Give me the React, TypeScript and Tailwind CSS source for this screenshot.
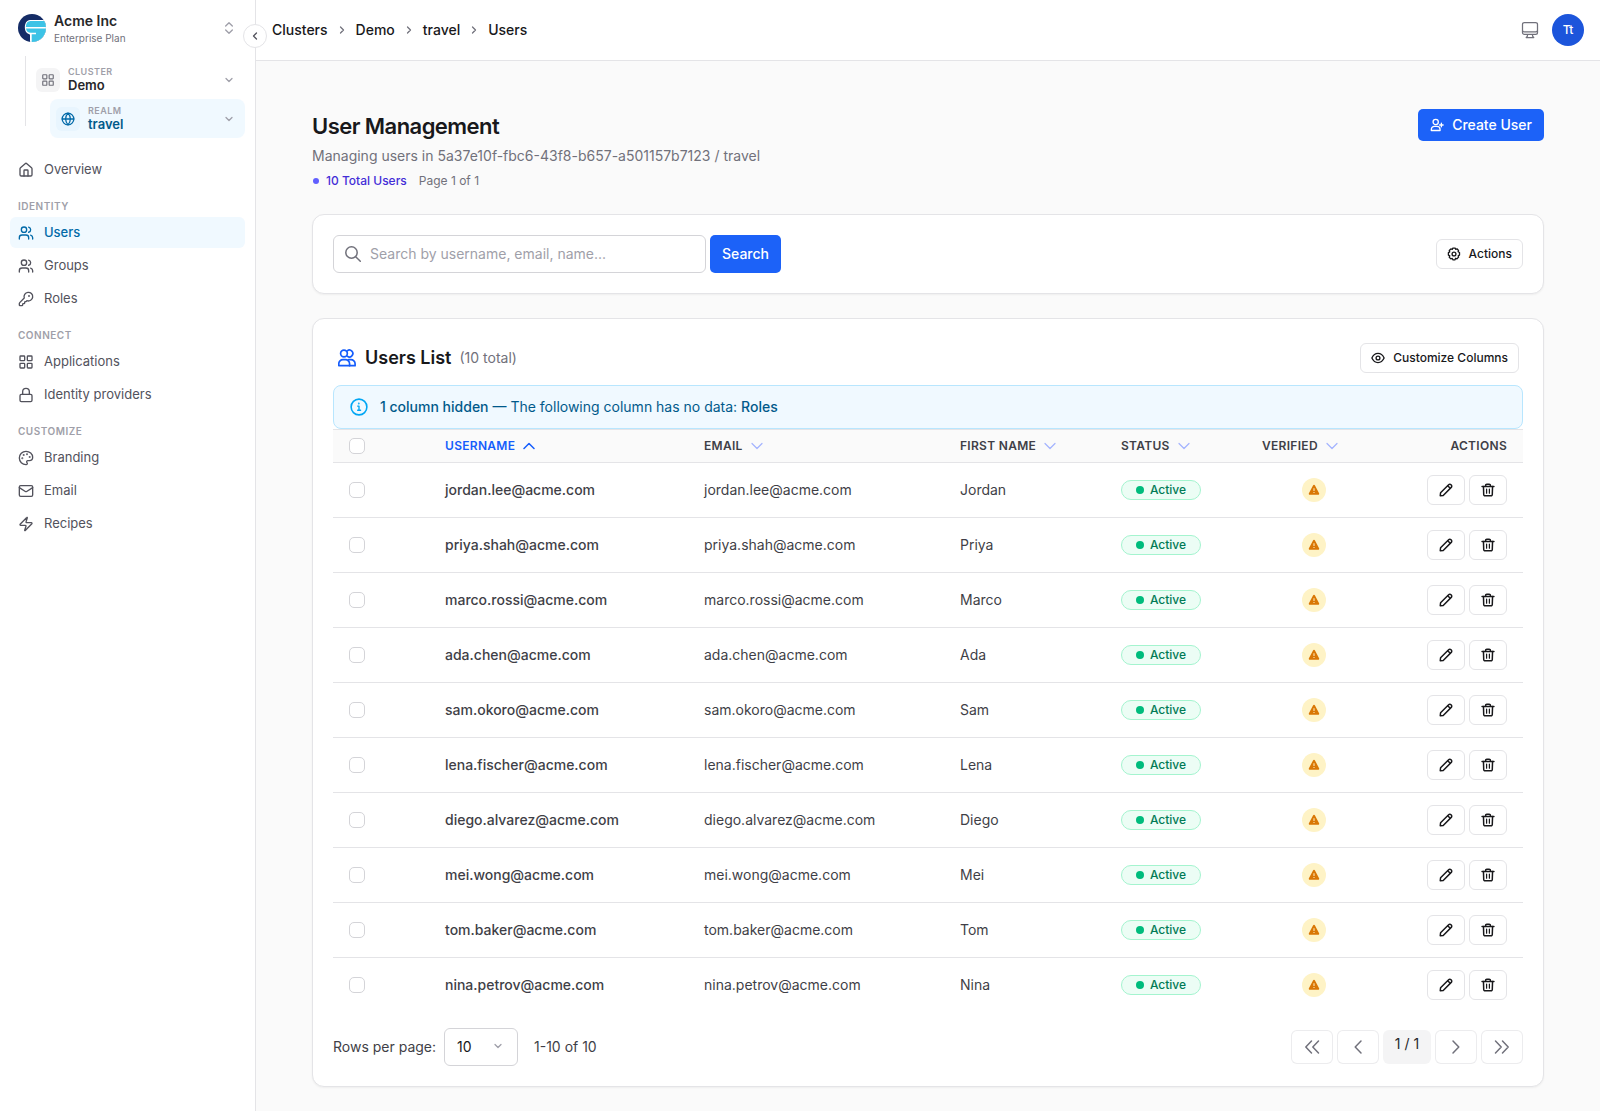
import type { ComponentType, ReactNode, SVGProps } from "react";
import {
  ChevronDown,
  ChevronLeft,
  ChevronRight,
  ChevronsUpDown,
  Globe,
  House,
  KeyRound,
  LayoutGrid,
  Lock,
  Mail,
  Palette,
  Users,
  Zap,
} from "lucide-react";
import { HiOutlineComputerDesktop } from "react-icons/hi2";

type IconProps = SVGProps<SVGSVGElement>;

function Glyph({ children, ...props }: IconProps & { children: ReactNode }) {
  return (
    <svg
      viewBox="0 0 16 16"
      fill="none"
      stroke="currentColor"
      strokeWidth="1.5"
      strokeLinecap="round"
      strokeLinejoin="round"
      aria-hidden="true"
      {...props}
    >
      {children}
    </svg>
  );
}

function BrandMark(props: IconProps) {
  return (
    <svg viewBox="0 0 28 28" aria-hidden="true" {...props}>
      <defs>
        <clipPath id="brand-disc">
          <circle cx="14" cy="14" r="14" />
        </clipPath>
      </defs>
      <g clipPath="url(#brand-disc)">
        <rect width="28" height="28" fill="#152c66" />
        <path d="M30 6H12C6.500 6 5.500 15.500 8.500 18.500C10 20 12 20.500 12 20.500V30H30Z" fill="#fff" />
        <path d="M30 7H12.500C9.500 7 8 9 7.800 13H30Z" fill="#3cc3e6" />
        <path d="M30 14.600H8C8.500 17.500 10 18.800 13 18.800H18V20.200H13.700V30H30Z" fill="#3cc3e6" />
      </g>
    </svg>
  );
}

function UserPlusIcon(props: IconProps) {
  return (
    <Glyph {...props}>
      <circle cx="6.500" cy="4.500" r="3" />
      <path d="M1.500 14.300v-1.300a3.500 3.500 0 0 1 3.500-3.500h3a3.500 3.500 0 0 1 3.500 3.500v1.300Z" />
      <path d="M13 6v4M11 8h4" />
    </Glyph>
  );
}

function PeopleIcon(props: IconProps) {
  return (
    <Glyph {...props}>
      <circle cx="5.300" cy="4" r="3" />
      <path d="M8.200 1.700a3 3 0 1 1 0 4.600" />
      <path d="M.7 14.800v-1.600a3.700 3.700 0 0 1 3.700-3.700h2.200a3.700 3.700 0 0 1 3.700 3.700v1.600Z" />
      <path d="M9.500 9.500h2a3.700 3.700 0 0 1 3.700 3.700v1.600h-4.900" />
    </Glyph>
  );
}

function GearIcon(props: IconProps) {
  return (
    <Glyph {...props}>
      <path d="M6.700 1.200h2.600l.6 1.500 1.500-.6 1.800 1.800-.5 1.500 1.600.9v2.900l-1.500.8.400 1.600-1.800 1.900-1.600-.6-.6 1.800H6.700l-.7-1.700-1.600.6-1.800-1.900.6-1.600-1.600-.7V6.500l1.500-.8-.5-1.700 1.800-1.800 1.600.6Z" />
      <circle cx="8" cy="8" r="2.200" />
    </Glyph>
  );
}

function EyeIcon(props: IconProps) {
  return (
    <Glyph {...props}>
      <path d="M1 8c1.600-3.400 4-5.200 7-5.200S13.400 4.600 15 8c-1.600 3.400-4 5.200-7 5.200S2.600 11.400 1 8Z" />
      <circle cx="8" cy="8" r="2.200" />
    </Glyph>
  );
}

function PencilIcon(props: IconProps) {
  return (
    <Glyph {...props}>
      <path d="m1.400 14.600.4-3.400 9.200-9.200a1.900 1.900 0 0 1 2.700 0l.3.300a1.900 1.900 0 0 1 0 2.700l-9.200 9.200Z" />
      <path d="m10 3.200 2.800 2.800" />
    </Glyph>
  );
}

function TrashIcon(props: IconProps) {
  return (
    <Glyph {...props}>
      <path d="M1.200 4h13.600M5.300 4V2.600a1.300 1.300 0 0 1 1.300-1.300h2.800a1.300 1.300 0 0 1 1.300 1.300V4" />
      <path d="m2.800 4 .3 9.200a1.500 1.500 0 0 0 1.500 1.500h6.800a1.500 1.500 0 0 0 1.500-1.500L13.200 4" />
      <path d="M6.400 7v4.600M9.600 7v4.600" strokeWidth="1.400" />
    </Glyph>
  );
}

function WarningIcon(props: IconProps) {
  return (
    <svg viewBox="0 0 12 12" aria-hidden="true" {...props}>
      <path
        d="M6 .8c.5 0 .8.200 1 .6l4.100 7.800c.4.800 0 1.600-.9 1.600H1.800c-.9 0-1.300-.8-.9-1.600L5 1.400c.2-.4.500-.6 1-.6Z"
        fill="#d97706"
      />
      <path d="M5.500 4.200h1v2.800h-1zM5.500 8h1v1h-1z" fill="#fef3c7" />
    </svg>
  );
}

function InfoIcon(props: IconProps) {
  return (
    <Glyph {...props}>
      <circle cx="8" cy="8" r="7" strokeWidth="1.400" />
      <path d="M6.800 7.200H8v3.600M6.800 10.900h2.600" strokeWidth="1.200" />
      <circle cx="7.800" cy="4.900" r=".3" strokeWidth="1" />
    </Glyph>
  );
}

function SearchIcon(props: IconProps) {
  return (
    <Glyph {...props}>
      <circle cx="6.500" cy="6.500" r="5.700" />
      <path d="m10.700 10.700 4.600 4.600" />
    </Glyph>
  );
}

function Arrow({ dir, ...props }: IconProps & { dir: "up" | "down" }) {
  return (
    <svg
      viewBox="0 0 12 8"
      fill="none"
      stroke="currentColor"
      strokeWidth={dir === "up" ? "1.5" : "1.2"}
      strokeLinecap="round"
      strokeLinejoin="round"
      aria-hidden="true"
      {...props}
    >
      <path d={dir === "up" ? "m1 6.500 5-5 5 5" : "m1 1.500 5 5 5-5"} />
    </svg>
  );
}

function PageArrow({ d }: { d: string }) {
  return (
    <Glyph className="size-4">
      <path d={d} />
    </Glyph>
  );
}

type NavEntry = { label: string; icon: ComponentType<any>; active?: boolean };

const navGroups: { title?: string; items: NavEntry[] }[] = [
  { items: [{ label: "Overview", icon: House }] },
  {
    title: "IDENTITY",
    items: [
      { label: "Users", icon: Users, active: true },
      { label: "Groups", icon: Users },
      { label: "Roles", icon: KeyRound },
    ],
  },
  {
    title: "CONNECT",
    items: [
      { label: "Applications", icon: LayoutGrid },
      { label: "Identity providers", icon: Lock },
    ],
  },
  {
    title: "CUSTOMIZE",
    items: [
      { label: "Branding", icon: Palette },
      { label: "Email", icon: Mail },
      { label: "Recipes", icon: Zap },
    ],
  },
];

const users = [
  ["jordan.lee@acme.com", "Jordan"],
  ["priya.shah@acme.com", "Priya"],
  ["marco.rossi@acme.com", "Marco"],
  ["ada.chen@acme.com", "Ada"],
  ["sam.okoro@acme.com", "Sam"],
  ["lena.fischer@acme.com", "Lena"],
  ["diego.alvarez@acme.com", "Diego"],
  ["mei.wong@acme.com", "Mei"],
  ["tom.baker@acme.com", "Tom"],
  ["nina.petrov@acme.com", "Nina"],
];

function Sidebar() {
  return (
    <aside className="relative w-64 shrink-0 border-r border-zinc-200 bg-white px-2.5">
      <button type="button" className="flex h-14 w-full items-center gap-2 pl-2 pr-2 text-left">
        <BrandMark className="size-7" />
        <span className="flex-1 pt-1">
          <span className="block text-sm/4 font-semibold text-zinc-800">Acme Inc</span>
          <span className="block text-[10px]/[18px] text-zinc-500">Enterprise Plan</span>
        </span>
        <ChevronsUpDown className="size-4 text-zinc-400" />
      </button>
      <div className="ml-[15px] h-[70px] border-l border-zinc-200 pt-1">
        <button type="button" className="flex h-[39px] w-full items-center gap-2 pl-2.5 pr-2.5 text-left">
          <span className="grid size-6 place-items-center rounded-md bg-zinc-100">
            <LayoutGrid className="size-3.5 text-zinc-500" />
          </span>
          <span className="flex-1">
            <span className="block text-[9px]/3 font-semibold tracking-wider text-zinc-400">CLUSTER</span>
            <span className="block text-[13px]/[15px] font-semibold text-zinc-800">Demo</span>
          </span>
          <ChevronDown className="size-3 text-zinc-400" strokeWidth={2.5} />
        </button>
        <div className="pl-6">
          <button type="button" className="flex h-[39px] w-full items-center gap-2 rounded-lg bg-sky-50 pl-1.5 pr-2.5 text-left">
            <span className="grid size-6 place-items-center rounded-md bg-sky-100/50">
              <Globe className="size-3.5 text-sky-700" strokeWidth={2.2} />
            </span>
            <span className="flex-1">
              <span className="block text-[9px]/3 font-semibold tracking-wider text-zinc-400">REALM</span>
              <span className="block text-[13px]/[15px] font-semibold text-sky-800">travel</span>
            </span>
            <ChevronDown className="size-3 text-zinc-400" strokeWidth={2.5} />
          </button>
        </div>
      </div>
      <nav className="mt-7">
        {navGroups.map((group, i) => (
          <div key={i}>
            {group.title && (
              <h2 className="mt-3 mb-0.5 pl-2 text-[10px]/[18px] font-semibold tracking-wider text-zinc-400">{group.title}</h2>
            )}
            <ul className="flex flex-col gap-0.5">
              {group.items.map(({ label, icon: Icon, active }) => (
                <li key={label}>
                  <a
                    href="#"
                    className={
                      active
                        ? "flex h-[31px] items-center gap-2.5 rounded-md bg-sky-50 px-2 text-[13px] font-medium text-sky-700"
                        : "flex h-[31px] items-center gap-2.5 rounded-md px-2 text-[13px] text-zinc-600"
                    }
                  >
                    <Icon className="size-4" strokeWidth={2} />
                    {label}
                  </a>
                </li>
              ))}
            </ul>
          </div>
        ))}
      </nav>
      <button
        type="button"
        aria-label="Collapse sidebar"
        className="absolute top-6 -right-3 grid size-6 place-items-center rounded-full border border-zinc-200 bg-white text-zinc-600"
      >
        <ChevronLeft className="size-3" strokeWidth={2.5} />
      </button>
    </aside>
  );
}

function TopBar() {
  const crumbs = ["Clusters", "Demo", "travel", "Users"];
  return (
    <header className="flex h-[61px] items-center justify-between border-b border-zinc-200 bg-white px-4">
      <nav aria-label="Breadcrumb" className="flex items-center gap-2 text-sm font-medium text-zinc-900">
        {crumbs.map((c, i) => (
          <span key={c} className="flex items-center gap-2">
            {i > 0 && <ChevronRight className="size-3 text-zinc-500" strokeWidth={2.5} />}
            <a href="#">{c}</a>
          </span>
        ))}
      </nav>
      <div className="flex items-center gap-3">
        <button type="button" aria-label="Theme" className="text-zinc-500">
          <HiOutlineComputerDesktop className="size-5" />
        </button>
        <button type="button" className="size-8 rounded-full bg-[#1c55db] text-xs font-medium text-white">
          Tt
        </button>
      </div>
    </header>
  );
}

const outlineBtn =
  "flex h-[30px] items-center rounded-md border border-zinc-200 bg-white text-xs font-medium text-zinc-900";

const box =
  "block size-4 appearance-none rounded-[5px] border border-zinc-300 bg-white checked:border-blue-600 checked:bg-blue-600";

function Th({ children, active, className = "" }: { children: string; active?: boolean; className?: string }) {
  return (
    <th scope="col" className={"px-4 text-left font-semibold " + className}>
      <button type="button" className="flex items-center gap-2 font-semibold tracking-wide">
        {children}
        <Arrow dir={active ? "up" : "down"} className={active ? "h-2 w-3" : "h-2 w-3 text-indigo-300"} />
      </button>
    </th>
  );
}

function UsersTable() {
  return (
    <table className="w-full table-fixed border-collapse text-left text-sm text-zinc-700">
      <colgroup>
        <col className="w-[96px]" />
        <col className="w-[259px]" />
        <col className="w-[256px]" />
        <col className="w-[161px]" />
        <col className="w-[141px]" />
        <col className="w-[135px]" />
        <col className="w-[142px]" />
      </colgroup>
      <thead className="bg-zinc-50 text-xs text-zinc-700">
        <tr className="h-[33px] border-y border-zinc-200">
          <th scope="col" className="px-4">
            <input type="checkbox" aria-label="Select all users" className={box} />
          </th>
          <Th active className="text-blue-600">USERNAME</Th>
          <Th>EMAIL</Th>
          <Th>FIRST NAME</Th>
          <Th>STATUS</Th>
          <Th>VERIFIED</Th>
          <th scope="col" className="px-4 text-right font-semibold tracking-wide">ACTIONS</th>
        </tr>
      </thead>
      <tbody>
        {users.map(([email, first]) => (
          <tr key={email} className="h-[55px] border-b border-zinc-200 last:h-[54px] last:border-b-0">
            <td className="px-4">
              <input type="checkbox" aria-label={"Select " + email} className={box} />
            </td>
            <td className="px-4 font-medium">{email}</td>
            <td className="px-4">{email}</td>
            <td className="px-4">{first}</td>
            <td className="px-4">
              <span className="flex h-5 w-20 items-center justify-center gap-1.5 rounded-full border border-emerald-200 bg-emerald-50 text-xs font-medium text-emerald-700">
                <span className="size-2 rounded-full bg-emerald-500" />
                Active
              </span>
            </td>
            <td className="px-4">
              <span role="img" aria-label="Not verified" className="mx-auto grid size-6 place-items-center rounded-full bg-amber-100">
                <WarningIcon className="size-3" />
              </span>
            </td>
            <td className="px-4">
              <div className="flex justify-end gap-1">
                <button type="button" aria-label={"Edit " + email} className={outlineBtn + " w-[38px] justify-center"}>
                  <PencilIcon className="size-3.5" strokeWidth="1.700" />
                </button>
                <button type="button" aria-label={"Delete " + email} className={outlineBtn + " w-[38px] justify-center"}>
                  <TrashIcon className="size-3.5" strokeWidth="1.700" />
                </button>
              </div>
            </td>
          </tr>
        ))}
      </tbody>
    </table>
  );
}

function Pager() {
  const btn = "grid h-[34px] w-[42px] place-items-center rounded-md border border-zinc-200/70 bg-white text-zinc-500";
  return (
    <div className="mt-4 flex items-center justify-between text-sm text-zinc-700">
      <div className="flex items-center">
        <label htmlFor="rows" className="mr-2">Rows per page:</label>
        <div className="relative mr-4">
          <select
            id="rows"
            defaultValue="10"
            className="h-[38px] w-[74px] appearance-none rounded-md border border-zinc-300 bg-white pl-3 text-zinc-900"
          >
            <option>10</option>
            <option>25</option>
            <option>50</option>
          </select>
          <ChevronDown className="pointer-events-none absolute top-3 right-3.5 size-3 text-zinc-400" strokeWidth={2.5} />
        </div>
        <span>1-10 of 10</span>
      </div>
      <div className="flex gap-1">
        <button type="button" aria-label="First page" className={btn}>
          <PageArrow d="M7.500 2 1.800 8l5.700 6M14.500 2 8.800 8l5.700 6" />
        </button>
        <button type="button" aria-label="Previous page" className={btn}>
          <PageArrow d="M11 2 5.200 8l5.800 6" />
        </button>
        <span className="h-[34px] w-12 rounded-md bg-zinc-100 pt-1 text-center text-zinc-800">1 / 1</span>
        <button type="button" aria-label="Next page" className={btn}>
          <PageArrow d="M5 2 10.800 8 5 14" />
        </button>
        <button type="button" aria-label="Last page" className={btn}>
          <PageArrow d="M1.500 2 7.200 8l-5.700 6M8.500 2 14.200 8l-5.700 6" />
        </button>
      </div>
    </div>
  );
}

export default function App() {
  const card = "mt-6 rounded-xl border border-zinc-200 bg-white p-5 shadow-xs";
  return (
    <div className="flex min-h-screen bg-[#fafafa] font-['Inter',sans-serif]">
      <Sidebar />
      <div className="min-w-0 flex-1">
        <TopBar />
        <main className="px-14 pt-12 pb-6">
          <div className="flex items-start justify-between">
            <div>
              <h1 className="text-[22px]/[34px] font-semibold tracking-tight text-zinc-900">User Management</h1>
              <p className="mt-[3px] text-sm/5 text-zinc-500">Managing users in 5a37e10f-fbc6-43f8-b657-a501157b7123 / travel</p>
              <div className="mt-1.5 flex items-center gap-3 text-xs/[18px]">
                <span className="flex items-center gap-[7px] pl-px font-medium text-indigo-700">
                  <span className="size-1.5 rounded-full bg-indigo-500" />
                  10 Total Users
                </span>
                <span className="text-zinc-500">Page 1 of 1</span>
              </div>
            </div>
            <button type="button" className="flex h-8 items-center gap-2 rounded-[5px] bg-[#1c62f8] px-3 text-sm font-medium text-white">
              <UserPlusIcon className="size-3.5" />
              Create User
            </button>
          </div>

          <section className={card + " flex items-center justify-between"}>
            <form className="flex gap-1">
              <div className="relative">
                <SearchIcon className="absolute top-[11px] left-3 size-4 text-zinc-500" />
                <input
                  type="search"
                  aria-label="Search users"
                  placeholder="Search by username, email, name..."
                  className="block h-[38px] w-[373px] rounded-md border border-zinc-300 pb-0.5 pl-9 text-sm placeholder:text-zinc-400"
                />
              </div>
              <button type="button" className="rounded-[5px] bg-[#1c62f8] px-3 text-sm font-medium text-white">
                Search
              </button>
            </form>
            <button type="button" className={outlineBtn + " gap-2 px-2.5"}>
              <GearIcon className="size-3.5" />
              Actions
            </button>
          </section>

          <section className={card}>
            <div className="flex items-center justify-between px-1 pt-1 pb-3">
              <div className="flex items-center gap-2">
                <PeopleIcon className="size-5 p-px text-blue-600" />
                <h2 className="text-lg/[30px] font-semibold text-zinc-900">Users List</h2>
                <span className="text-sm text-zinc-500">(10 total)</span>
              </div>
              <button type="button" className={outlineBtn + " gap-2 px-2.5"}>
                <EyeIcon className="size-3.5" />
                Customize Columns
              </button>
            </div>
            <div role="status" className="flex h-11 items-center gap-3 rounded-lg border border-sky-200 bg-sky-50 px-4 text-sm text-sky-800">
              <InfoIcon className="size-[18px] text-sky-500" />
              <p>
                <strong className="font-medium">1 column hidden</strong> — The following column has no data:{" "}
                <strong className="font-medium">Roles</strong>
              </p>
            </div>
            <UsersTable />
            <Pager />
          </section>
        </main>
      </div>
    </div>
  );
}
